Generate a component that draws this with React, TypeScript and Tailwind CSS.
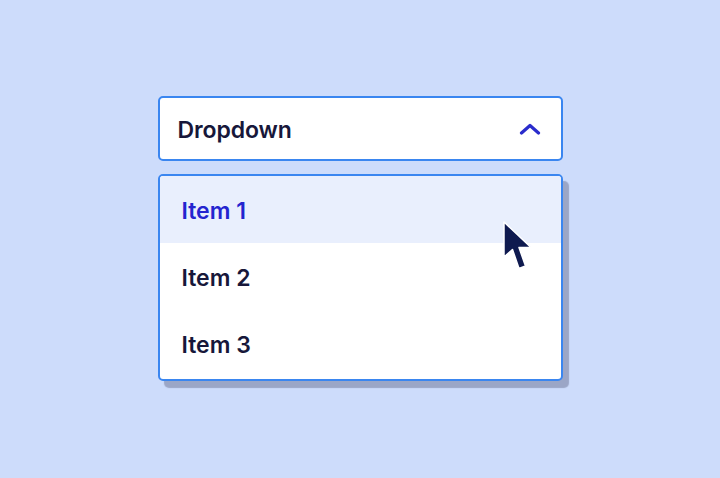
import React from 'react';

const items = ['Item 1', 'Item 2', 'Item 3'];

export default function App() {
  return (
    <div
      className="flex h-[478px] w-[720px] flex-col items-center bg-[#cddcfb] pt-[96px]"
      style={{ fontFamily: 'Inter, "Noto Sans", sans-serif' }}
    >
      <div className="w-[405px]">
        {/* Trigger */}
        <div className="flex h-[65px] items-center justify-between rounded-[5px] border-2 border-[#3a86f0] bg-white pl-[18px] pr-[20px]">
          <span className="pt-[4px] text-[23px] font-semibold tracking-[-0.1px] text-[#17173a]">Dropdown</span>
          <svg width="22" height="12" viewBox="0 0 22 12" fill="none">
            <path d="M2.5 10 L11 2.5 L19.5 10" stroke="#2a2ccc" strokeWidth="3.2" strokeLinecap="round" strokeLinejoin="round" />
          </svg>
        </div>

        {/* Menu */}
        <div className="relative mt-[13px] overflow-hidden rounded-[5px] border-2 border-[#3a86f0] bg-white shadow-[6px_7px_1px_#9ba6c6]">
          {items.map((item, i) => (
            <div
              key={item}
              className={
                i === 0
                  ? 'flex h-[67px] items-center bg-[#e9effd] pl-[22px] pt-[3px] text-[23px] font-semibold text-[#2424cf]'
                  : 'flex h-[67px] items-center pl-[22px] pt-[3px] text-[23px] font-semibold text-[#17173a]'
              }
            >
              {item}
            </div>
          ))}
          <div className="h-[2px]" />

          {/* Cursor */}
          <svg
            className="absolute left-[342px] top-[44px]"
            width="32"
            height="54"
            viewBox="0 0 32 54"
            fill="none"
          >
            <path
              d="M2 2 L2 37 L10.5 29.5 L17 48.5 L23.5 46 L17 27.5 L29 27.5 Z"
              fill="#0f1a4f"
              stroke="#ffffff"
              strokeWidth="1.5"
              strokeLinejoin="round"
            />
          </svg>
        </div>
      </div>
    </div>
  );
}
